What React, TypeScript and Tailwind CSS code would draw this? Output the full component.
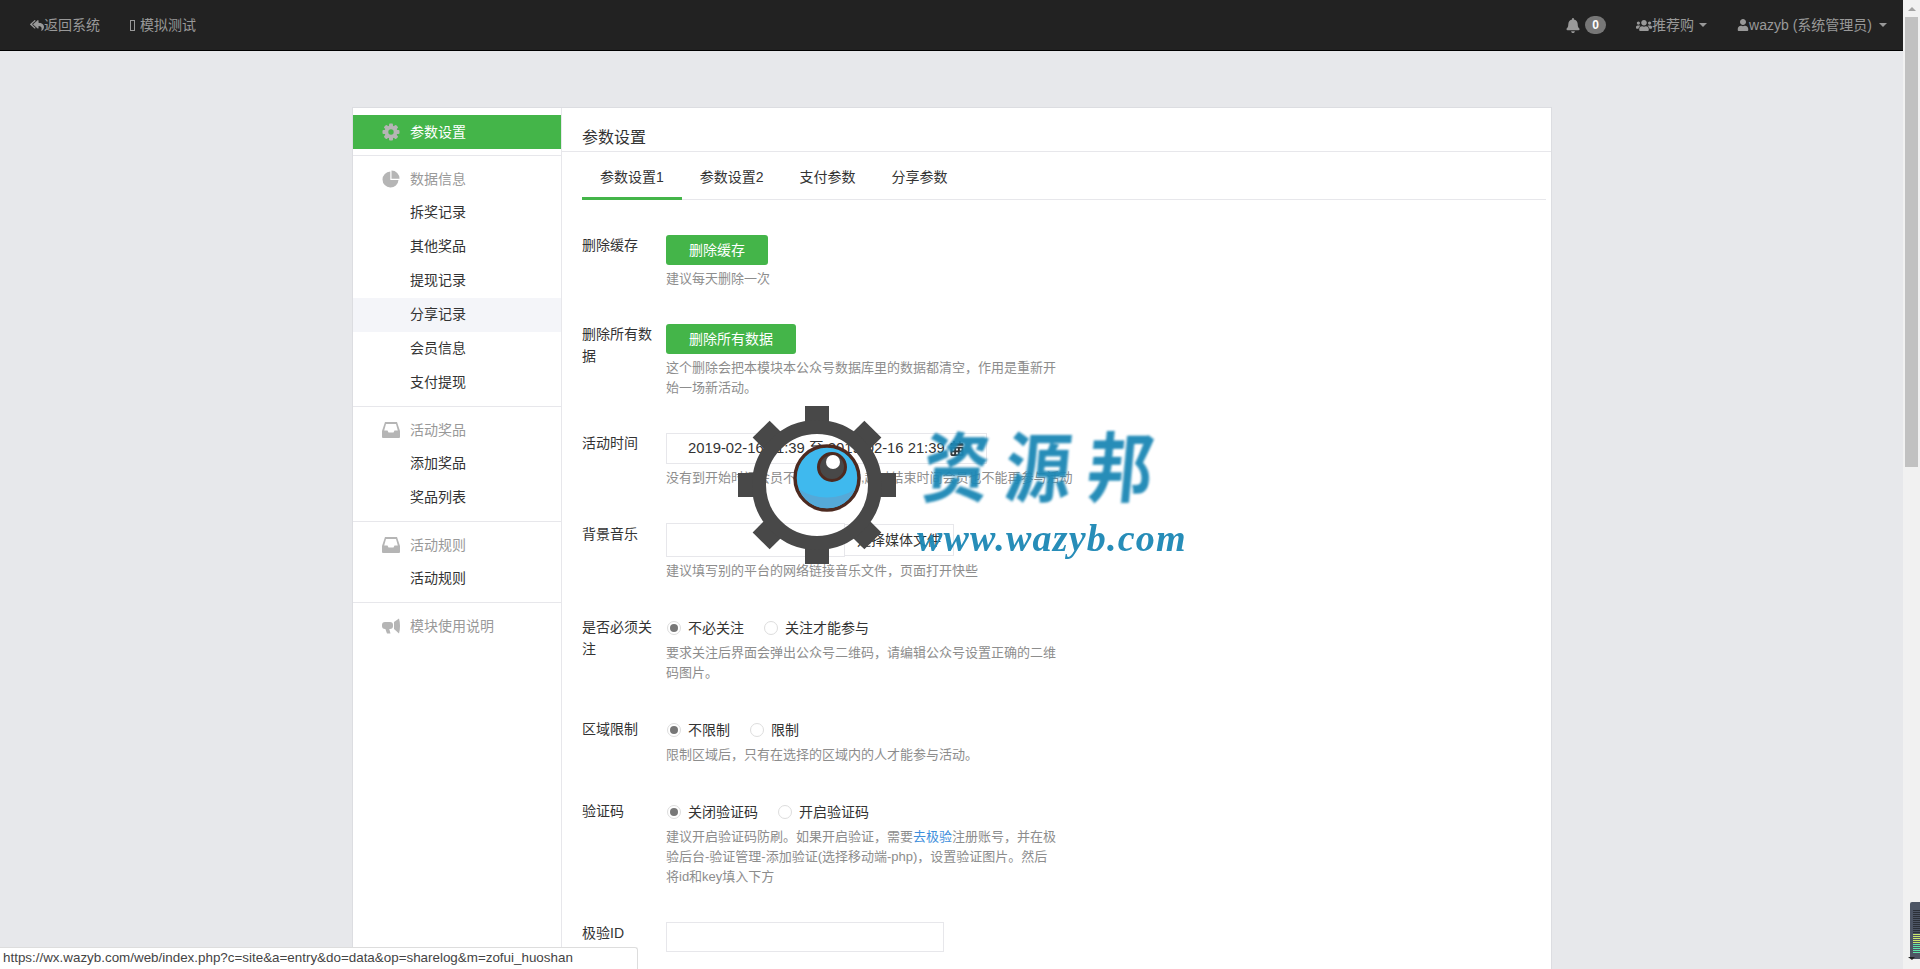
import { FaBell, FaCalendarAlt, FaReplyAll, FaUser, FaUsers } from "react-icons/fa";
import type { ReactNode } from "react";

const font = "font-['Liberation_Sans','Noto_Sans_CJK_SC',sans-serif]";

function Caret({ gap = "ml-[7px]" }: { gap?: string }) {
  return <span className={`${gap} inline-block h-0 w-0 border-x-[4px] border-t-[4px] border-x-transparent border-t-[#999]`} />;
}

function CogIcon() {
  const teeth = [0, 45, 90, 135, 180, 225, 270, 315];
  return (
    <svg width="18" height="18" viewBox="0 0 18 18" fill="#b5b5b5">
      {teeth.map((a) => (
        <rect key={a} x="7" y="0.5" width="4" height="4" rx="1" transform={`rotate(${a} 9 9)`} />
      ))}
      <path fillRule="evenodd" d="M9 2.5a6.5 6.5 0 1 1 0 13a6.5 6.5 0 0 1 0-13zM9 6.3a2.7 2.7 0 1 0 0 5.4a2.7 2.7 0 0 0 0-5.4z" />
    </svg>
  );
}

function PieIcon() {
  return (
    <svg width="18" height="18" viewBox="0 0 18 18" fill="#b5b5b5">
      <path d="M8.3 1.5A8 8 0 1 0 16.5 10H8.3Z" />
      <path d="M9.5 0.5A8 8 0 0 1 17.5 8.7H9.5Z" />
    </svg>
  );
}

function InboxIcon() {
  return (
    <svg width="18" height="16" viewBox="0 0 18 16" fill="#b5b5b5">
      <path fillRule="evenodd" d="M3 0H15L18 9V15a1 1 0 0 1-1 1H1a1 1 0 0 1-1-1V9ZM4 2H14L15.8 8.5H12.5L11.5 10.5H6.5L5.5 8.5H2.2Z" />
    </svg>
  );
}

function HornIcon() {
  return (
    <svg width="18" height="16" viewBox="0 0 18 16" fill="#b5b5b5">
      <rect x="0" y="4" width="11" height="7" rx="3" />
      <path d="M3 10H7L8.5 15.5H5Z" />
      <path d="M12 4L17 0.5Q18 4 18 8T17 15.5L12 11Z" />
    </svg>
  );
}

function TopBar() {
  return (
    <div className="flex h-[51px] items-center justify-between border-b border-black bg-[#222] pl-[30px] pr-[16px] text-[14px] text-[#999]">
      <div className="flex items-center">
        <FaReplyAll className="h-[13px] w-[14px]" />
        <span>返回系统</span>
        <span className="ml-[30px] mr-[5px] h-[11px] w-[5px] border border-[#999]" />
        <span>模拟测试</span>
      </div>
      <div className="flex items-center">
        <FaBell className="h-[15px] w-[14px]" />
        <span className="ml-[5px] flex h-[18px] w-[21px] items-center justify-center rounded-[9px] bg-[#777] text-[12px] font-bold text-white">0</span>
        <FaUsers className="ml-[30px] h-[15px] w-[16px]" />
        <span>推荐购</span>
        <Caret gap="ml-[5px]" />
        <FaUser className="ml-[30px] h-[12px] w-[12px]" />
        <span>wazyb (系统管理员)</span>
        <Caret />
      </div>
    </div>
  );
}

function SideGroup({ icon, title, items }: { icon: ReactNode; title: string; items: string[] }) {
  return (
    <div className="border-t border-[#e7e7eb] pt-[6px] pb-[6px]">
      <div className="flex h-[34px] items-center pl-[29px] text-[#999]">
        <span className="flex w-[18px] justify-center">{icon}</span>
        <span className="ml-[10px]">{title}</span>
      </div>
      {items.map((t) => (
        <div key={t} className={`flex h-[34px] items-center pb-[2px] pl-[57px] text-[#333] ${t === "分享记录" ? "bg-[#f4f5f9]" : ""}`}>{t}</div>
      ))}
    </div>
  );
}

function Sidebar() {
  return (
    <div className="w-[209px] shrink-0 border-r border-[#e7e7eb] pt-[7px] text-[14px]">
      <div className="mb-[6px] flex h-[34px] items-center bg-[#44b549] pl-[29px] text-white">
        <span className="flex w-[18px] justify-center"><CogIcon /></span>
        <span className="ml-[10px]">参数设置</span>
      </div>
      <SideGroup icon={<PieIcon />} title="数据信息" items={["拆奖记录", "其他奖品", "提现记录", "分享记录", "会员信息", "支付提现"]} />
      <SideGroup icon={<InboxIcon />} title="活动奖品" items={["添加奖品", "奖品列表"]} />
      <SideGroup icon={<InboxIcon />} title="活动规则" items={["活动规则"]} />
      <SideGroup icon={<HornIcon />} title="模块使用说明" items={[]} />
    </div>
  );
}

function Row({ label, up, children }: { label: string; up?: boolean; children: ReactNode }) {
  return (
    <div className="flex">
      <div className={`mr-[12px] w-[72px] shrink-0 text-[14px] leading-[22px] text-[#333] ${up ? "-mt-px" : ""}`}>{label}</div>
      <div>{children}</div>
    </div>
  );
}

function Help({ children }: { children: ReactNode }) {
  return <div className="mt-[4px] w-[392px] text-[13px] leading-[20px] text-[#8d8d8d]">{children}</div>;
}

function GreenButton({ children }: { children: ReactNode }) {
  return <button className="h-[30px] rounded-[3px] bg-[#44b549] px-[23px] text-[14px] text-white">{children}</button>;
}

function Radio({ checked, label, gap }: { checked?: boolean; label: string; gap?: string }) {
  return (
    <label className={`flex items-center ${gap ?? ""}`}>
      <span className="flex h-[14px] w-[14px] items-center justify-center rounded-full border border-[#ddd] bg-white">
        {checked && <span className="h-[8px] w-[8px] rounded-full bg-[#777]" />}
      </span>
      <span className="ml-[7px] text-[14px] text-[#333]">{label}</span>
    </label>
  );
}

function RadioPair({ a, b }: { a: string; b: string }) {
  return (
    <div className="flex h-[23px] items-center pl-[1px] pt-[1px]">
      <Radio checked label={a} />
      <Radio label={b} gap="ml-[20px]" />
    </div>
  );
}

function Tabs() {
  const tabs = ["参数设置1", "参数设置2", "支付参数", "分享参数"];
  return (
    <div className="ml-[20px] mr-[5px] mt-px flex h-[47px] border-b border-[#e7e7eb] text-[14px] text-[#333]">
      {tabs.map((t, i) => (
        <div key={t} className={`h-[47px] border-b-[3px] px-[18px] pt-[14px] leading-[20px] ${i === 0 ? "border-[#44b549]" : "border-transparent"}`}>{t}</div>
      ))}
    </div>
  );
}

function Form() {
  return (
    <div className="flex flex-col gap-[35px] pl-[20px] pt-[35px]">
      <Row up label="删除缓存">
        <GreenButton>删除缓存</GreenButton>
        <Help>建议每天删除一次</Help>
      </Row>
      <Row up label="删除所有数据">
        <GreenButton>删除所有数据</GreenButton>
        <Help>这个删除会把本模块本公众号数据库里的数据都清空，作用是重新开始一场新活动。</Help>
      </Row>
      <Row up label="活动时间">
        <div className="flex h-[31px] w-[321px] items-center border border-[#e7e7eb] pl-[21px] text-[14.8px] text-[#333]">
          <span>2019-02-16 21:39 至 2019-02-16 21:39</span>
          <FaCalendarAlt className="ml-[5px] h-[15px] w-[14px]" />
        </div>
        <Help><span className="block w-[420px]">没有到开始时间会员不能参与活动,超过结束时间会员也不能再参与活动</span></Help>
      </Row>
      <Row label="背景音乐">
        <div className="flex items-center">
          <div className="h-[34px] w-[179px] border border-[#e7e7eb]" />
          <button className="-ml-px h-[32px] w-[110px] border border-[#e7e7eb] bg-white text-[14px] text-[#333]">选择媒体文件</button>
        </div>
        <Help>建议填写别的平台的网络链接音乐文件，页面打开快些</Help>
      </Row>
      <Row label="是否必须关注">
        <RadioPair a="不必关注" b="关注才能参与" />
        <Help>要求关注后界面会弹出公众号二维码，请编辑公众号设置正确的二维码图片。</Help>
      </Row>
      <Row label="区域限制">
        <RadioPair a="不限制" b="限制" />
        <Help>限制区域后，只有在选择的区域内的人才能参与活动。</Help>
      </Row>
      <Row label="验证码">
        <RadioPair a="关闭验证码" b="开启验证码" />
        <Help>建议开启验证码防刷。如果开启验证，需要<span className="text-[#3f8fdc]">去极验</span>注册账号，并在极验后台-验证管理-添加验证(选择移动端-php)，设置验证图片。然后将id和key填入下方</Help>
      </Row>
      <Row label="极验ID">
        <div className="h-[30px] w-[278px] border border-[#e7e7eb]" />
      </Row>
    </div>
  );
}

function GearLogo() {
  const teeth = [0, 45, 90, 135, 180, 225, 270, 315];
  return (
    <svg width="160" height="160" viewBox="0 0 160 160" className="blur-[0.5px]">
      {teeth.map((a) => (
        <rect key={a} x="68" y="1" width="24" height="24" fill="#484848" transform={`rotate(${a} 80 80)`} />
      ))}
      <circle cx="80" cy="80" r="58" fill="none" stroke="#484848" strokeWidth="14" />
      <circle cx="90" cy="73" r="32" fill="#3fb9ee" stroke="#4d2a20" strokeWidth="3.5" />
      <path d="M62 84a30 30 0 0 0 56 0a40 30 0 0 1-56 0z" fill="#55a9d8" />
      <circle cx="95" cy="62" r="13.5" fill="#484848" stroke="#4d2a20" strokeWidth="3" />
      <circle cx="96" cy="57" r="7" fill="#fff" />
    </svg>
  );
}

function Watermark() {
  return (
    <>
      <div className="pointer-events-none absolute left-[737px] top-[405px]"><GearLogo /></div>
      <div className="pointer-events-none absolute left-[928px] top-[420px] origin-top -skew-x-6 scale-y-[1.15] whitespace-nowrap font-['Noto_Sans_CJK_SC',sans-serif] text-[66px] font-bold leading-[74px] tracking-[16px] text-[#1c87b5] opacity-95 blur-[0.8px]">资源邦</div>
      <div className="pointer-events-none absolute left-[917px] top-[513px] whitespace-nowrap font-['Liberation_Serif',serif] text-[38px] font-bold italic leading-[50px] tracking-[1.2px] text-[#1c87b5] opacity-95 blur-[0.6px]">www.wazyb.com</div>
    </>
  );
}

function Scrollbar() {
  return (
    <div className="flex h-full w-[17px] shrink-0 flex-col items-center bg-[#f1f1f1]">
      <div className="flex h-[17px] items-center justify-center">
        <span className="h-0 w-0 border-x-[4px] border-b-[4px] border-x-transparent border-b-[#a3a3a3]" />
      </div>
      <div className="h-[450px] w-[13px] bg-[#c1c1c1]" />
    </div>
  );
}

function MeterWidget() {
  return (
    <svg width="12" height="60" viewBox="0 0 12 60" className="absolute bottom-[7px] right-0">
      <path d="M4 0h8v57H4q-2 0-2-2V2q0-2 2-2z" fill="#4d5564" />
      {Array.from({ length: 22 }).map((_, i) => (
        <rect key={i} x="5" y={8 + i * 2} width="7" height="1" fill={i < 12 ? "#2b3038" : i < 17 ? "#c9e86b" : "#5fe3a8"} />
      ))}
      <path d="M0 55h7l-3 3z" fill="#222" />
    </svg>
  );
}

export default function App() {
  return (
    <div className={`relative flex h-[969px] w-[1920px] overflow-hidden bg-[#e7e8eb] ${font}`}>
      <div className="h-full w-[1903px] shrink-0">
        <TopBar />
        <div className="ml-[352px] mt-[56px] flex min-h-[900px] w-[1200px] border border-[#dcdde1] bg-white">
          <Sidebar />
          <div className="flex-1">
            <div className="h-[44px] border-b border-[#e7e7eb] pl-[20px] pt-[19px] text-[16px] leading-[22px] text-[#333]">参数设置</div>
            <Tabs />
            <Form />
          </div>
        </div>
      </div>
      <Scrollbar />
      <Watermark />
      <MeterWidget />
      <div className="absolute bottom-0 left-0 flex h-[22px] w-[638px] items-center rounded-tr-[3px] border-r border-t border-[#ddd] bg-white pl-[3px] font-['Liberation_Sans',sans-serif] text-[13.4px] text-[#444]">
        https://wx.wazyb.com/web/index.php?c=site&amp;a=entry&amp;do=data&amp;op=sharelog&amp;m=zofui_huoshan
      </div>
    </div>
  );
}
